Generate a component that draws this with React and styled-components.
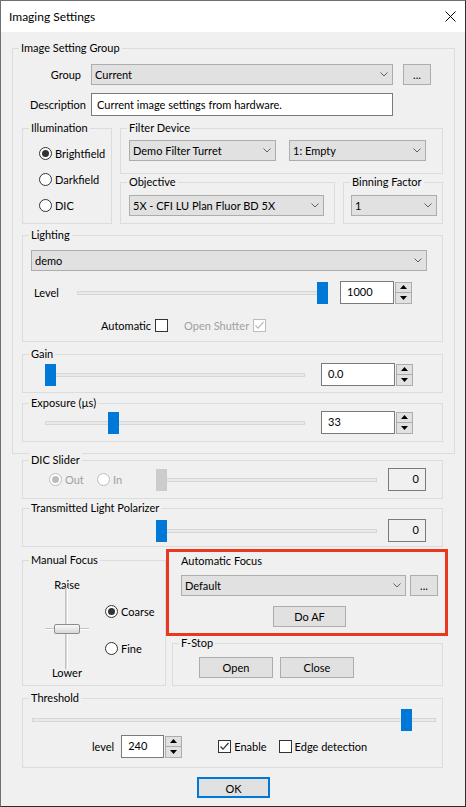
import React from 'react';
import styled, { createGlobalStyle, css } from 'styled-components';

const GlobalStyle = createGlobalStyle`
  *, *::before, *::after { box-sizing: border-box; }
  html, body { margin: 0; padding: 0; background: #ffffff; }
  body {
    font-family: Lato, "Noto Sans", "Liberation Sans", sans-serif;
    font-size: 11px;
    color: #000000;
  }
  button { font: inherit; color: inherit; }
`;

const Window = styled.div`
  width: 466px;
  height: 807px;
  display: flex;
  flex-direction: column;
  background: #f0f0f0;
  border: 1px solid #707070;
  border-right-color: #2e2e2e;
  border-bottom-color: #2e2e2e;
  overflow: hidden;
`;

const TitleBar = styled.div`
  height: 31px;
  flex: none;
  display: flex;
  align-items: center;
  justify-content: space-between;
  padding: 0 9px 0 8px;
  background: #ffffff;
  font-size: 12px;
`;

const Body = styled.div`
  flex: 1;
  padding: 16px 10px 0 11px;
`;

const GroupBox = styled.div`
  --pl: ${p => p.$pl ?? 8}px;
  border: 1px solid #dcdcdc;
  margin-top: ${p => p.$mt ?? 0}px;
  margin-left: ${p => p.$ml ?? 0}px;
  padding: 0 ${p => p.$pr ?? 8}px ${p => p.$pb ?? 8}px var(--pl);
  ${p => p.$w && css`width: ${p.$w}px;`}
`;

const Caption = styled.div`
  display: table;
  margin: -8px 0 0 calc(6px - var(--pl));
  padding: 0 2px;
  line-height: 14px;
  background: #f0f0f0;
  white-space: nowrap;
`;

const Row = styled.div`
  display: flex;
  align-items: center;
  margin-top: ${p => p.$mt ?? 0}px;
  padding-left: ${p => p.$pl ?? 0}px;
  gap: ${p => p.$gap ?? 0}px;
`;

const FieldLabel = styled.span`
  flex: none;
  width: ${p => p.$w}px;
  margin-right: ${p => p.$gap}px;
  text-align: right;
`;

const Label = styled.span`
  flex: none;
  width: ${p => (p.$w ? `${p.$w}px` : 'auto')};
  margin-right: ${p => p.$mr ?? 0}px;
  padding-left: ${p => p.$pl ?? 0}px;
  color: ${p => (p.$disabled ? '#a0a0a0' : '#000000')};
`;

const ComboBox = styled.div`
  flex: ${p => (p.$w ? 'none' : '1')};
  width: ${p => (p.$w ? `${p.$w}px` : 'auto')};
  height: 21px;
  display: flex;
  align-items: center;
  justify-content: space-between;
  padding: 0 4px 0 3px;
  background: #e1e1e1;
  border: 1px solid #adadad;
  white-space: nowrap;
`;

const Button = styled.button`
  flex: none;
  width: ${p => p.$w}px;
  height: 21px;
  padding: 0;
  background: #e1e1e1;
  border: 1px solid #adadad;
  line-height: 19px;
  ${p => p.$default && css`border: 2px solid #0078d7;`}
`;

const TextBox = styled.div`
  flex: none;
  width: ${p => p.$w}px;
  height: 23px;
  padding: 0 5px;
  line-height: 21px;
  background: #ffffff;
  border: 1px solid #7a7a7a;
`;

const NumBox = styled.div`
  flex: none;
  width: ${p => p.$w}px;
  height: 23px;
  padding: 0 6px;
  line-height: 20px;
  background: #ffffff;
  border: 1px solid #7a7a7a;
`;

const ValueBox = styled.div`
  flex: none;
  width: 38px;
  height: 23px;
  padding: 0 6px;
  line-height: 20px;
  text-align: right;
  border: 1px solid #7a7a7a;
`;

const Spin = styled.div`
  flex: none;
  width: 17px;
  height: 22px;
  margin-left: 1px;
  display: flex;
  flex-direction: column;
`;

const SpinHalf = styled.span`
  flex: 1;
  display: flex;
  align-items: center;
  justify-content: center;
  background: #e1e1e1;
  border: 1px solid #adadad;
  & + & { border-top: none; }
`;

const Track = styled.div`
  position: relative;
  flex: none;
  width: ${p => p.$w}px;
  height: 22px;
  margin-left: ${p => p.$ml ?? 0}px;
  margin-right: ${p => p.$mr ?? 0}px;
  &::before {
    content: '';
    position: absolute;
    left: 0;
    right: 0;
    top: 9px;
    height: 4px;
    background: #e7eaea;
    border: 1px solid #d6d6d6;
  }
`;

const Thumb = styled.span`
  position: absolute;
  top: 0;
  width: 11px;
  height: 22px;
  background: ${p => (p.$disabled ? '#cccccc' : '#0078d7')};
`;

const Choice = styled.span`
  flex: none;
  display: flex;
  align-items: center;
  gap: ${p => p.$gap ?? 3}px;
  height: 16px;
  width: ${p => (p.$w ? `${p.$w}px` : 'auto')};
  margin-left: ${p => p.$ml ?? 0}px;
  color: ${p => (p.$disabled ? '#a0a0a0' : '#000000')};
`;

const RadioDot = styled.span`
  flex: none;
  width: 13px;
  height: 13px;
  border-radius: 50%;
  display: flex;
  align-items: center;
  justify-content: center;
  background: #ffffff;
  border: 1px solid ${p => (p.$disabled ? '#bcbcbc' : '#333333')};
  &::after {
    content: '';
    display: ${p => (p.$checked ? 'block' : 'none')};
    width: 7px;
    height: 7px;
    border-radius: 50%;
    background: ${p => (p.$disabled ? '#bcbcbc' : '#333333')};
  }
`;

const CheckSquare = styled.span`
  flex: none;
  width: 13px;
  height: 13px;
  display: flex;
  align-items: center;
  justify-content: center;
  background: #ffffff;
  border: 1px solid ${p => (p.$disabled ? '#bcbcbc' : '#333333')};
`;

const RadioList = styled.div`
  display: flex;
  flex-direction: column;
  gap: ${p => p.$gap}px;
  margin-top: ${p => p.$mt ?? 0}px;
  margin-left: ${p => p.$ml ?? 0}px;
`;

const MidGrid = styled.div`
  display: grid;
  grid-template-columns: 90px 323px;
  column-gap: 8px;
  margin-top: 12px;
`;

const Stack = styled.div`
  display: flex;
  flex-direction: column;
`;

const Lower = styled.div`
  margin: 0 12px 0 10px;
`;

const BottomGrid = styled.div`
  display: grid;
  grid-template-columns: 144px 277px;
  margin-top: 2px;
`;

const Highlight = styled.div`
  margin-right: -5px;
  padding: 2px 7px 6px 12px;
  border: 3px solid #e8381f;
`;

const PlainCaption = styled.div`
  line-height: 14px;
`;

const Center = styled.div`
  display: flex;
  justify-content: center;
  margin-top: ${p => p.$mt ?? 0}px;
`;

const Spacer = styled.span`
  flex: none;
  width: ${p => p.$w}px;
`;

const FocusRow = styled.div`
  display: flex;
  margin-top: 11px;
`;

const FocusColumn = styled.div`
  width: 46px;
  margin-left: 21px;
  display: flex;
  flex-direction: column;
  align-items: center;
`;

const FocusLabel = styled.span`
  line-height: 14px;
`;

const FocusTrack = styled.div`
  position: relative;
  width: 100%;
  height: 74px;
  display: flex;
  align-items: center;
  justify-content: center;
  &::before {
    content: '';
    position: absolute;
    top: -4px;
    bottom: -3px;
    left: 21px;
    width: 3px;
    background: #d6d6d6;
    border-left: 1px solid #c4c4c4;
    border-right: 1px solid #ffffff;
  }
  &::after {
    content: '';
    position: absolute;
    left: 1px;
    right: 1px;
    top: 36px;
    height: 2px;
    background: #c4c4c4;
    border-bottom: 1px solid #ffffff;
  }
`;

const FocusThumb = styled.span`
  position: relative;
  z-index: 1;
  width: 26px;
  height: 10px;
  border-radius: 2px;
  border: 1px solid #8c8c8c;
  background: linear-gradient(#f8f8f8, #d8d8d8);
`;

const Chevron = () => (
  <svg width="8" height="5" viewBox="0 0 8 5">
    <polyline points="0.5,0.5 4,4 7.5,0.5" fill="none" stroke="#606060" strokeWidth="1" />
  </svg>
);

const Combo = ({ w, children }) => (
  <ComboBox $w={w}>
    <span>{children}</span>
    <Chevron />
  </ComboBox>
);

const Arrow = ({ up }) => (
  <svg width="7" height="4" viewBox="0 0 7 4">
    <polygon points={up ? '0,4 7,4 3.5,0' : '0,0 7,0 3.5,4'} fill="#000" />
  </svg>
);

const Spinner = () => (
  <Spin>
    <SpinHalf><Arrow up /></SpinHalf>
    <SpinHalf><Arrow /></SpinHalf>
  </Spin>
);

const Slider = ({ w, ml, mr, value, disabled }) => (
  <Track $w={w} $ml={ml} $mr={mr}>
    <Thumb $disabled={disabled} style={{ left: Math.round(value * (w - 11)) }} />
  </Track>
);

const Radio = ({ checked, disabled, ml, w, children }) => (
  <Choice $disabled={disabled} $ml={ml} $w={w}>
    <RadioDot $checked={checked} $disabled={disabled} />
    {children}
  </Choice>
);

const CheckBox = ({ checked, disabled }) => (
  <CheckSquare $disabled={disabled}>
    {checked && (
      <svg width="11" height="11" viewBox="0 0 11 11">
        <polyline
          points="1.5,5.5 4,8.2 9.5,2"
          fill="none"
          stroke={disabled ? '#bcbcbc' : '#333'}
          strokeWidth="1.2"
        />
      </svg>
    )}
  </CheckSquare>
);

const App = () => (
  <>
    <GlobalStyle />
    <Window>
      <TitleBar>
        <span>Imaging Settings</span>
        <svg width="11" height="11" viewBox="0 0 11 11">
          <path d="M0.5 0.5 L10.5 10.5 M10.5 0.5 L0.5 10.5" stroke="#000" strokeWidth="1" />
        </svg>
      </TitleBar>
      <Body>
        <GroupBox $pl={9} $pr={11} $pb={11}>
          <Caption>Image Setting Group</Caption>
          <Row $mt={9}>
            <FieldLabel $w={59} $gap={10}>Group</FieldLabel>
            <Combo w={302}>Current</Combo>
            <Spacer $w={10} />
            <Button $w={28}>...</Button>
          </Row>
          <Row $mt={8}>
            <FieldLabel $w={64} $gap={5}>Description</FieldLabel>
            <TextBox $w={302}>Current image settings from hardware.</TextBox>
          </Row>

          <MidGrid>
            <GroupBox $pl={16} $pb={10}>
              <Caption>Illumination</Caption>
              <RadioList $gap={10} $mt={10}>
                <Radio checked>Brightfield</Radio>
                <Radio>Darkfield</Radio>
                <Radio>DIC</Radio>
              </RadioList>
            </GroupBox>
            <Stack>
              <GroupBox $pl={8} $pb={12}>
                <Caption>Filter Device</Caption>
                <Row $mt={5} $gap={13}>
                  <Combo w={147}>Demo Filter Turret</Combo>
                  <Combo w={137}>1: Empty</Combo>
                </Row>
              </GroupBox>
              <Row $mt={8} $gap={8}>
                <GroupBox $w={215} $pl={8} $pb={7}>
                  <Caption>Objective</Caption>
                  <Row $mt={6}>
                    <Combo w={195}>5X - CFI LU Plan Fluor BD 5X</Combo>
                  </Row>
                </GroupBox>
                <GroupBox $w={100} $pl={7} $pb={7}>
                  <Caption>Binning Factor</Caption>
                  <Row $mt={6}>
                    <Combo w={86}>1</Combo>
                  </Row>
                </GroupBox>
              </Row>
            </Stack>
          </MidGrid>

          <GroupBox $mt={11} $pl={8} $pr={15} $pb={9}>
            <Caption>Lighting</Caption>
            <Row $mt={8}>
              <Combo>demo</Combo>
            </Row>
            <Row $mt={10}>
              <Label $w={46} $pl={3}>Level</Label>
              <Slider w={251} mr={12} value={1} />
              <NumBox $w={54}>1000</NumBox>
              <Spinner />
            </Row>
            <Row $mt={15} $pl={70}>
              <Label $mr={4}>Automatic</Label>
              <CheckBox />
              <Label $mr={4} $pl={16} $disabled>Open Shutter</Label>
              <CheckBox checked disabled />
            </Row>
          </GroupBox>

          <GroupBox $mt={12} $pl={8} $pb={6}>
            <Caption>Gain</Caption>
            <Row $mt={2}>
              <Slider w={260} ml={14} mr={16} value={0} />
              <NumBox $w={74}>0.0</NumBox>
              <Spinner />
            </Row>
          </GroupBox>

          <GroupBox $mt={10} $pl={8} $pb={7}>
            <Caption>Exposure (µs)</Caption>
            <Row $mt={1}>
              <Slider w={260} ml={14} mr={16} value={0.253} />
              <NumBox $w={74}>33</NumBox>
              <Spinner />
            </Row>
          </GroupBox>
        </GroupBox>

        <Lower>
          <GroupBox $mt={6} $pl={8} $pb={7}>
            <Caption>DIC Slider</Caption>
            <Row $mt={1}>
              <Row $pl={18}>
                <Radio checked disabled w={48}>Out</Radio>
                <Radio disabled w={59}>In</Radio>
              </Row>
              <Slider w={221} mr={11} value={0} disabled />
              <ValueBox>0</ValueBox>
            </Row>
          </GroupBox>

          <GroupBox $mt={9} $pl={8} $pb={4}>
            <Caption>Transmitted Light Polarizer</Caption>
            <Row $mt={4}>
              <Slider w={221} ml={125} mr={11} value={0} />
              <ValueBox>0</ValueBox>
            </Row>
          </GroupBox>

          <BottomGrid>
            <GroupBox $mt={11} $pl={0} $pb={4}>
              <Caption>Manual Focus</Caption>
              <FocusRow>
                <FocusColumn>
                  <FocusLabel>Raise</FocusLabel>
                  <FocusTrack>
                    <FocusThumb />
                  </FocusTrack>
                  <FocusLabel>Lower</FocusLabel>
                </FocusColumn>
                <RadioList $gap={21} $mt={25} $ml={15}>
                  <Radio checked>Coarse</Radio>
                  <Radio>Fine</Radio>
                </RadioList>
              </FocusRow>
            </GroupBox>
            <Stack>
              <Highlight>
                <PlainCaption>Automatic Focus</PlainCaption>
                <Row $mt={7} $gap={4}>
                  <Combo w={225}>Default</Combo>
                  <Button $w={28}>...</Button>
                </Row>
                <Center $mt={10}>
                  <Button $w={73}>Do AF</Button>
                </Center>
              </Highlight>
              <GroupBox $mt={7} $ml={6} $pl={26} $pb={7}>
                <Caption>F-Stop</Caption>
                <Row $mt={7} $gap={7}>
                  <Button $w={74}>Open</Button>
                  <Button $w={74}>Close</Button>
                </Row>
              </GroupBox>
            </Stack>
          </BottomGrid>

          <GroupBox $mt={12} $pl={9} $pr={6} $pb={9}>
            <Caption>Threshold</Caption>
            <Row $mt={4}>
              <Slider w={404} value={0.939} />
            </Row>
            <Row $mt={4} $pl={60}>
              <Label $mr={7}>level</Label>
              <NumBox $w={43}>240</NumBox>
              <Spinner />
              <Spacer $w={36} />
              <CheckBox checked />
              <Label $pl={3} $mr={12}>Enable</Label>
              <CheckBox />
              <Label $pl={3}>Edge detection</Label>
            </Row>
          </GroupBox>
        </Lower>

        <Center $mt={9}>
          <Button $w={73} $default>OK</Button>
        </Center>
      </Body>
    </Window>
  </>
);

export default App;
